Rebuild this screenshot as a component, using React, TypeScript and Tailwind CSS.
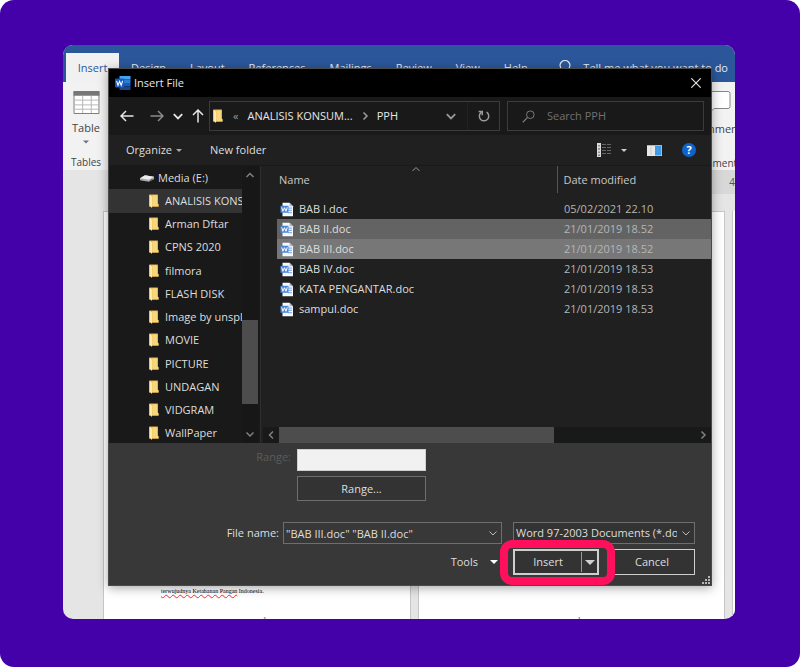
import { useState } from "react";
import type { ReactNode } from "react";

const tabs = ["Design", "Layout", "References", "Mailings", "Review", "View", "Help"];

const folders = [
    "ANALISIS KONSUMSI",
    "Arman Dftar",
    "CPNS 2020",
    "filmora",
    "FLASH DISK",
    "Image by unsplash",
    "MOVIE",
    "PICTURE",
    "UNDAGAN",
    "VIDGRAM",
    "WallPaper",
];

const files = [
    { name: "BAB I.doc", date: "05/02/2021 22.10", row: "" },
    { name: "BAB II.doc", date: "21/01/2019 18.52", row: "bg-[#636363]" },
    { name: "BAB III.doc", date: "21/01/2019 18.52", row: "bg-[#777777]" },
    { name: "BAB IV.doc", date: "21/01/2019 18.53", row: "" },
    { name: "KATA PENGANTAR.doc", date: "21/01/2019 18.53", row: "" },
    { name: "sampul.doc", date: "21/01/2019 18.53", row: "" },
];

function Chevron({ dir, className = "" }: { dir: "up" | "down" | "left" | "right"; className?: string }) {
    const paths = {
        up: "M1.5 7 L5 3.5 L8.5 7",
        down: "M1.5 3.5 L5 7 L8.5 3.5",
        left: "M7 1.5 L3.5 5 L7 8.5",
        right: "M3.5 1.5 L7 5 L3.5 8.5",
    };
    return (
        <svg viewBox="0 0 10 10" className={`shrink-0 ${className}`} fill="none" stroke="currentColor">
            <path d={paths[dir]} />
        </svg>
    );
}

function Caret({ className = "" }: { className?: string }) {
    return (
        <svg viewBox="0 0 8 4" className={`shrink-0 ${className}`} fill="currentColor">
            <path d="M0 0h8L4 4z" />
        </svg>
    );
}

function Arrow({ rotate = "" }: { rotate?: string }) {
    return (
        <svg viewBox="0 0 14 14" className={`size-3.5 ${rotate}`} fill="none" stroke="currentColor" strokeWidth="1.5">
            <path d="M13.5 7H1.2M6 2L1 7l5 5" />
        </svg>
    );
}

function FolderIcon() {
    return (
        <svg viewBox="0 0 10 14" className="h-3.5 w-2.5 shrink-0">
            <path d="M.3.6h8.500v9l.9.6v2.500H.3z" fill="#dfb050" />
            <path d="M3.300 1.200h5.200v8.600l.8.700v1.800h-6z" fill="#f8d778" />
            <path d="M.4.9l1.500.3 1.200 1.600v10.400l-.9.5-.5-1.400H.4z" fill="#fde9ab" />
        </svg>
    );
}

function DocIcon() {
    return (
        <svg viewBox="0 0 14 15" className="h-[15px] w-3.5 shrink-0">
            <path d="M2.500.8h7L13 4.300v9.900H2.500z" fill="#f6f8fc" />
            <path d="M9.500.8v3.500H13z" fill="#aebbd0" />
            <path d="M8 5.500h4v1.300H8zM8 7.700h4V9H8zM8 9.900h4v1.300H8z" fill="#8db4e8" />
            <path d="M.5 3.800h8v7h-8z" fill="#4a86d6" />
            <path d="M1.700 5.300l1.200 4 1.600-3.600 1.500 3.600 1.300-4" fill="none" stroke="#fff" strokeWidth="1" />
        </svg>
    );
}

function WordIcon() {
    return (
        <svg viewBox="0 0 16 14" className="h-3.5 w-4">
            <path d="M4.5 0h11v3.6h-11z" fill="#41a5ee" />
            <path d="M4.5 3.6h11V7h-11z" fill="#2b7cd3" />
            <path d="M4.5 7h11v3.4h-11z" fill="#185abd" />
            <path d="M4.5 10.4h11V14h-11z" fill="#1c4587" />
            <rect x="0" y="2.6" width="9.2" height="9" rx="1" fill="#185abd" />
            <path d="M1.6 4.8l1.4 4.6 1.6-4.2 1.6 4.2 1.4-4.6" fill="none" stroke="#fff" strokeWidth="1.1" />
        </svg>
    );
}

function DriveIcon() {
    return (
        <svg viewBox="0 0 14 8" className="h-2 w-3.5 shrink-0">
            <path d="M0 4.200l5-3 9 1.600v2.400L8.800 7.800 0 6.200z" fill="#a9a9a9" />
            <path d="M0 4.200l5-3 9 1.600-5.200 3z" fill="#ececec" />
            <path d="M10 6.300l2.600-1.500v.8L10 7.100z" fill="#4b4b4b" />
        </svg>
    );
}

function TableIcon() {
    return (
        <svg viewBox="0 0 27 24" className="h-6 w-[27px]">
            <path d="M.5.5h26v23H.5z" fill="#fff" stroke="#777" />
            <path d="M0 0h27v5H0z" fill="#777" />
            <path d="M9.5 5v18M18.5 5v18M1 9.5h25M1 14.5h25M1 19h25" stroke="#b5b5b5" fill="none" />
        </svg>
    );
}

function Page({ children }: { children?: ReactNode }) {
    return (
        <div className="flex flex-1 flex-col justify-end overflow-hidden border-x border-t border-[#c6c6c6] bg-white">
            {children}
            <div className="-mb-1.5 pl-4 text-center font-['Liberation_Serif',serif] text-[8px] leading-2 text-gray-600">1</div>
        </div>
    );
}

function WordWindow() {
    return (
        <div className="flex min-w-0 flex-col bg-[#e5e5e5] [grid-area:1/1]">
            <div className="flex h-[37px] shrink-0 items-stretch overflow-hidden whitespace-nowrap bg-[#2b579a] pt-2 pl-[3px] text-[#e4ebf5]">
                <button className="w-[53px] shrink-0 bg-[#f1f1f1] text-[#2b579a]">Insert</button>
                <div className="flex items-center gap-6 pl-3">
                    {tabs.map((tab) => (
                        <button key={tab}>{tab}</button>
                    ))}
                </div>
                <button className="ml-auto flex items-center gap-3 pr-[7px]">
                    <svg viewBox="0 0 12 16" className="h-4 w-3" fill="none" stroke="currentColor" strokeWidth="1.2">
                        <path d="M4 12V10C2.500 9 1 8 1 5.500a5 5 0 0 1 10 0C11 8 9.500 9 8 10v2zM4 14h4" />
                    </svg>
                    Tell me what you want to do
                </button>
            </div>
            <div className="flex h-[88px] shrink-0 justify-between bg-[#f2f2f2] text-[#444]">
                <div className="flex w-[46px] flex-col items-center pt-[9px]">
                    <TableIcon />
                    <button className="mt-1.5 flex flex-col items-center gap-1">
                        Table
                        <Caret className="h-1 w-1.5 text-gray-500" />
                    </button>
                    <span className="mt-2.5 text-[10px]">Tables</span>
                </div>
                <div className="flex w-[54px] flex-col items-start overflow-hidden pt-[9px] pl-2.5">
                    <svg viewBox="0 0 28 23" className="ml-3 h-[23px] w-7 shrink-0" fill="#fff" stroke="#888">
                        <path d="M3 .5h22a2 2 0 0 1 2 2v13a2 2 0 0 1-2 2H11l-4 4v-4H3a2 2 0 0 1-2-2v-13a2 2 0 0 1 2-2z" />
                    </svg>
                    <button className="mt-[7px]">Comment</button>
                    <span className="mt-[18px] text-[10px]">Comments</span>
                </div>
            </div>
            <div className="flex h-[41px] shrink-0 justify-end text-[10px] text-[#555]">
                <div className="flex h-6 w-24 items-center justify-end bg-[#d8d8d8]">4</div>
            </div>
            <div className="flex min-h-0 flex-1 pl-10">
                <div className="flex flex-1 gap-[7px]">
                    <Page>
                        <p className="mb-[22px] ml-[57px] font-['Liberation_Serif',serif] text-[6px] leading-2 text-black">
                            <span className="underline decoration-red-500 decoration-wavy decoration-1">
                                terwujudnya Ketahanan Pangan
                            </span>{" "}
                            Indonesia.
                        </p>
                    </Page>
                    <Page />
                </div>
                <div className="ml-[7px] w-[3px] border-l border-[#c6c6c6] bg-white"></div>
            </div>
        </div>
    );
}

function NavBar() {
    return (
        <div className="flex h-[38px] items-center bg-[#191919] pr-[7px] pl-[11px] text-[#e6e6e6]">
            <button aria-label="Back"><Arrow /></button>
            <button aria-label="Forward" className="ml-4 text-[#8a8a8a]"><Arrow rotate="rotate-180" /></button>
            <button aria-label="Recent locations" className="ml-2">
                <Chevron dir="down" className="size-3 stroke-[1.5]" />
            </button>
            <button aria-label="Up" className="ml-[7px]"><Arrow rotate="rotate-90" /></button>
            <div className="ml-1 flex h-[30px] min-w-0 flex-[286] items-center border border-[#3c3c3c] pl-[3px]">
                <FolderIcon />
                <span className="ml-2.5 text-[#9a9a9a]">«</span>
                <button className="ml-[9px] whitespace-nowrap">ANALISIS KONSUM...</button>
                <Chevron dir="right" className="ml-[7px] size-2.5 stroke-[1.5] text-[#9a9a9a]" />
                <button className="ml-[7px]">PPH</button>
                <button aria-label="Previous locations" className="ml-auto text-[#9a9a9a]">
                    <Chevron dir="down" className="size-3 stroke-[1.5]" />
                </button>
                <button aria-label="Refresh" className="ml-[10px] flex h-full w-8 items-center justify-center border-l border-[#222] text-[#9a9a9a]">
                    <svg viewBox="0 0 12 12" className="size-3" fill="none" stroke="currentColor" strokeWidth="1.5">
                        <path d="M8.600 2.200A4.700 4.700 0 1 1 3.200 2.400M.6 1.500h3.700v3.700" />
                    </svg>
                </button>
            </div>
            <label className="ml-[7px] flex h-[30px] min-w-0 flex-[181] items-center border border-[#3c3c3c] pl-3.5 text-[#7a7a7a]">
                <svg viewBox="0 0 13 13" className="size-[13px] shrink-0" fill="none" stroke="currentColor">
                    <circle cx="8.300" cy="4.700" r="3.800" />
                    <path d="M5.600 7.400L.8 12.200" strokeWidth="1.300" />
                </svg>
                <input
                    aria-label="Search PPH"
                    placeholder="Search PPH"
                    className="ml-3 w-full min-w-0 bg-transparent outline-none placeholder:text-[#707070]"
                />
            </label>
        </div>
    );
}

function ToolBar() {
    return (
        <div className="flex h-[31px] items-center border-b border-[#191919] bg-[#202020] pr-[15px] pl-[17px] text-[#dedede]">
            <button className="flex items-center gap-1">
                Organize <Caret className="h-[3px] w-1.5 text-[#aaa]" />
            </button>
            <button className="ml-7">New folder</button>
            <button aria-label="Change view" className="ml-auto flex items-center gap-2.5">
                <svg viewBox="0 0 14 14" className="size-3.5">
                    <path d="M0 0h4v14H0z" fill="#dcdcdc" />
                    <path d="M1 2h2v1.500H1zM1 8.500h2V10H1z" fill="#b88a4a" />
                    <path d="M1 5.200h2v1.500H1zM1 11.500h2V13H1z" fill="#5c87b8" />
                    <path d="M5 1.500h9M5 4.500h9M5 7.500h9M5 10.500h9" stroke="#666" strokeDasharray="4 1" />
                </svg>
                <Caret className="h-[3px] w-1.5 text-[#ccc]" />
            </button>
            <button aria-label="Preview pane" className="ml-5">
                <svg viewBox="0 0 15 11" className="h-[11px] w-[15px]">
                    <path d="M0 0h15v11H0z" fill="#e8e8e8" />
                    <path d="M8 1h6.500v9.500H8z" fill="#3f9be6" />
                    <path d="M0 .5h15" stroke="#8bbbe4" />
                    <path d="M4 2v8" stroke="#c9c9c9" />
                </svg>
            </button>
            <button
                aria-label="Help"
                className="ml-5 flex size-3.5 items-center justify-center rounded-full bg-[#0f63c9] text-[11px] font-bold text-white"
            >
                ?
            </button>
        </div>
    );
}

function SideBar() {
    const [current, setCurrent] = useState(folders[0]);

    return (
        <div className="flex w-[152px] shrink-0 border-r border-[#2e2e2e] bg-[#191919] text-[#dedede]">
            <ul className="-mb-0.5 flex min-w-0 flex-1 flex-col">
                <li className="flex flex-1 items-center gap-1 pl-[31px]">
                    <DriveIcon />
                    <button>Media (E:)</button>
                </li>
                {folders.map((folder) => (
                    <li key={folder} className={`flex flex-1 items-center ${folder === current ? "bg-[#333333]" : ""}`}>
                        <button
                            onClick={() => setCurrent(folder)}
                            className="flex w-full items-center gap-1.5 overflow-hidden pl-10 whitespace-nowrap"
                        >
                            <FolderIcon />
                            {folder}
                        </button>
                    </li>
                ))}
            </ul>
            <div className="mr-0.5 flex w-4 flex-col items-center bg-[#171717] text-[#808080]">
                <Chevron dir="up" className="my-1 size-2.5 stroke-[1.5]" />
                <div className="flex-[136]"></div>
                <div className="w-full flex-[84] bg-[#4d4d4d]"></div>
                <div className="flex-[21]"></div>
                <Chevron dir="down" className="my-1 size-2.5 stroke-[1.5]" />
            </div>
        </div>
    );
}

function FileList() {
    return (
        <div className="flex min-w-0 flex-1 flex-col bg-[#202020]">
            <table className="ml-4 table-fixed text-left text-[#dedede]">
                <thead>
                    <tr className="h-[27px]">
                        <th className="relative w-[280px] pl-0.5 font-normal text-[#c8c8c8]">
                            Name
                            <Chevron dir="up" className="absolute -top-0.5 left-[48%] size-2.5 text-[#9a9a9a]" />
                        </th>
                        <th className="border-l border-[#555] pl-1.5 font-normal text-[#c8c8c8]">Date modified</th>
                    </tr>
                    <tr className="h-[6px]"></tr>
                </thead>
                <tbody>
                    {files.map((file) => (
                        <tr key={file.name} className={`h-5 ${file.row}`}>
                            <td className="p-0">
                                <div className="flex items-center gap-[5px] pl-[3px]">
                                    <DocIcon />
                                    {file.name}
                                </div>
                            </td>
                            <td className="p-0 pl-[7px] text-[#b5b5b5]">{file.date}</td>
                        </tr>
                    ))}
                </tbody>
            </table>
            <div className="mt-auto ml-0.5 flex h-4 items-center bg-[#171a19] text-[#808080]">
                <Chevron dir="left" className="mx-[3px] size-2.5 stroke-[1.5]" />
                <div className="h-full flex-[275] bg-[#4d4d4d]"></div>
                <div className="flex-[141]"></div>
                <Chevron dir="right" className="mx-[3px] size-2.5 stroke-[1.5]" />
            </div>
        </div>
    );
}

function Actions() {
    const [name, setName] = useState('"BAB III.doc" "BAB II.doc"');

    return (
        <div className="bg-[#383838] pt-1.5 pr-4 pb-2.5 text-[#dedede]">
            <div className="flex">
                <label htmlFor="range" className="w-[188px] pr-1.5 text-right text-[#5c5c5c]">Range:</label>
                <input id="range" className="h-[22px] w-[129px] border border-[#d0d0d0] bg-[#f1f1f1] px-1 text-black" />
            </div>
            <button className="mt-[5px] ml-[188px] block h-[25px] w-[129px] border border-[#6e6e6a] bg-[#333]">Range...</button>
            <div className="mt-[21px] flex items-center">
                <label htmlFor="filename" className="w-[174px] shrink-0 pr-1 text-right">File name:</label>
                <div className="relative flex-[219]">
                    <input
                        id="filename"
                        value={name}
                        onChange={(e) => setName(e.target.value)}
                        className="block h-[22px] w-full border border-[#6e6e6e] bg-[#383838] pr-5 pl-0.5 outline-none"
                    />
                    <Chevron dir="down" className="pointer-events-none absolute top-1.5 right-1 size-2.5 text-[#bbb]" />
                </div>
                <div className="relative ml-[11px] flex-[182]">
                    <select
                        aria-label="File type"
                        className="block h-[22px] w-full appearance-none overflow-hidden border border-[#6e6e6e] bg-[#333] pr-[17px] pl-0.5 outline-none"
                    >
                        <option>Word 97-2003 Documents (*.doc)</option>
                    </select>
                    <Chevron dir="down" className="pointer-events-none absolute top-1.5 right-1 size-2.5 text-[#bbb]" />
                </div>
            </div>
            <div className="mt-[5px] flex items-center justify-end">
                <button className="flex items-center gap-3">
                    Tools <Caret className="h-1 w-2 text-white" />
                </button>
                <div className="relative ml-[15px] flex h-[26px] w-[86px] items-center border-2 border-[#cfcfcf] bg-[#333]">
                    <button className="h-full flex-1">Insert</button>
                    <button aria-label="More insert options" className="flex h-[20px] w-4 items-center justify-center border-l border-[#999]">
                        <Caret className="h-[5px] w-2.5 text-[#d0d0d0]" />
                    </button>
                    <div className="pointer-events-none absolute -top-[11px] -right-[18px] -bottom-3 -left-[15px] z-10 rounded-xl border-8 border-[#ff0f5c]"></div>
                </div>
                <button className="ml-2.5 h-[26px] w-[86px] border border-[#cfcfcf] bg-[#333]">Cancel</button>
            </div>
        </div>
    );
}

function InsertFileDialog() {
    return (
        <div
            role="dialog"
            aria-label="Insert File"
            className="relative mt-[23px] mr-[23px] mb-[33px] ml-[45px] flex min-w-0 flex-col self-start border border-[#4a4a4a] bg-[#202020] shadow-[0_2px_10px_rgba(0,0,0,0.35)] [grid-area:1/1]"
        >
            <div className="flex h-7 items-center bg-black pr-2.5 pl-1.5 text-[#e6e6e6]">
                <WordIcon />
                <span className="ml-[3px]">Insert File</span>
                <button aria-label="Close" className="ml-auto">
                    <svg viewBox="0 0 10 10" className="size-2.5" stroke="currentColor" strokeWidth="1.1">
                        <path d="M.3.3l9.400 9.400M9.700.3L.3 9.700" />
                    </svg>
                </button>
            </div>
            <NavBar />
            <ToolBar />
            <div className="flex h-[277px] overflow-hidden">
                <SideBar />
                <FileList />
            </div>
            <Actions />
            <svg viewBox="0 0 8 8" className="absolute right-px bottom-px size-2" fill="#b5b5b5">
                <path d="M6 0h2v2H6zM3 3h2v2H3zM6 3h2v2H6zM0 6h2v2H0zM3 6h2v2H3zM6 6h2v2H6z" />
            </svg>
        </div>
    );
}

export default function App() {
    return (
        <div className="min-h-screen bg-white font-['Open_Sans',sans-serif] text-[11px] leading-4">
            <main className="min-h-screen rounded-[14px] bg-[#4400a9] pt-[45px] pr-[65px] pb-12 pl-[63px]">
                <div className="grid grid-cols-1 overflow-hidden rounded-[10px]">
                    <WordWindow />
                    <InsertFileDialog />
                </div>
            </main>
        </div>
    );
}
